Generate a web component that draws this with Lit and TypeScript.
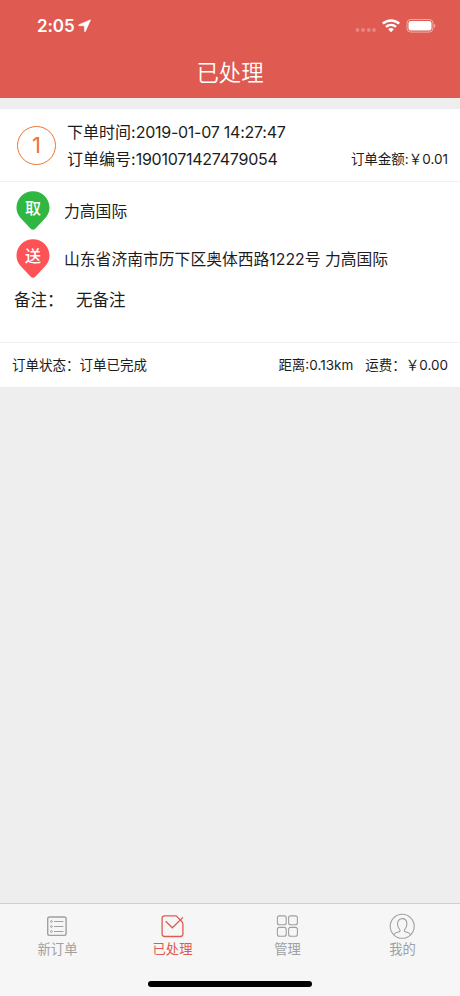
import { LitElement, html, css, svg } from "lit";
import { customElement, property } from "lit/decorators.js";
import { classMap } from "lit/directives/class-map.js";

const TABS = [
  {
    label: "新订单",
    active: false,
    icon: svg`<rect x="3.7" y="4" width="18.4" height="18.4" rx="1.8" stroke-width="1.4"/>
      <path d="M10 8.5h9.4M10 13.5h9.4M10 18.5h9.4" stroke-width="1.1"/>
      <circle cx="7.4" cy="8.5" r=".9"/><circle cx="7.4" cy="13.5" r=".9"/><circle cx="7.4" cy="18.5" r=".9"/>`,
  },
  {
    label: "已处理",
    active: true,
    icon: svg`<path d="M17.2 2.9H5.4a2.3 2.300 0 0 0-2.300 2.300v16a2.300 2.300 0 0 0 2.300 2.300h16.200a2.300 2.300 0 0 0 2.300-2.300V11.500c0-1.300-.3-2.200-1.300-3.200z" stroke-width="1.3"/>
      <path d="M6.700 8.300l6.600 6.500L24 4.400" stroke-width="1.3"/>`,
  },
  {
    label: "管理",
    active: false,
    icon: svg`<g stroke-width="1.1"><rect x="3.4" y="2.900" width="8.800" height="8.800" rx="2"/><rect x="14.600" y="2.900" width="8.800" height="8.800" rx="2"/>
      <rect x="3.400" y="14.400" width="8.800" height="8.800" rx="2"/><rect x="14.600" y="14.400" width="8.800" height="8.800" rx="2"/></g>`,
  },
  {
    label: "我的",
    active: false,
    icon: svg`<g stroke-width="1.1"><circle cx="13.200" cy="13.300" r="12"/>
      <path d="M4.700 21.700c1.200-1.700 3.200-2.200 5-2.800 1.400-.5 1.700-1.200 1.100-2.200-1.500-1.500-2.300-3.600-2.300-5.900 0-3.100 1.900-5.200 4.700-5.200s4.700 2.100 4.700 5.200c0 2.300-.8 4.400-2.300 5.900-.6 1-.3 1.700 1.100 2.200 1.800.6 3.800 1.100 5 2.800"/></g>`,
  },
];

@customElement("place-pin")
class PlacePin extends LitElement {
  @property() label = "";
  @property() kind = "pickup";
  static styles = css`
    :host { display: grid; width: 34px; height: 39px; }
    svg, span { grid-area: 1 / 1; }
    svg { width: 34px; height: 39px; }
    .pickup { fill: #2fb742; }
    .deliver { fill: #fe5356; }
    span { color: #fff; font-size: 16px; font-weight: 500; line-height: 35px; text-align: center; }
  `;
  render() {
    return html`<svg viewBox="0 0 34 39" class=${this.kind}>
        <path d="M17 .2C7.700 .2 .5 7.600 .5 16.600c0 5.500 2.500 9 6.200 12.700l8 8.400c1.500 1.400 3.100 1.400 4.600 0l8-8.400c3.700-3.700 6.200-7.200 6.200-12.700C33.500 7.600 26.300 .2 17 .2z"/>
      </svg><span>${this.label}</span>`;
  }
}

@customElement("app-root")
class AppRoot extends LitElement {
  static styles = css`
    :host {
      display: flex; flex-direction: column; width: 460px; height: 996px;
      background: #eee; color: #1c1c1c; overflow: hidden;
      font-family: Inter, "Noto Sans CJK SC", sans-serif;
      font-size: 16px; font-weight: 400; white-space: nowrap;
    }
    * { box-sizing: border-box; }
    svg { display: block; flex: none; }
    .top { height: 98px; background: #df5a50; color: #fff; flex: none; }
    .status { height: 50px; padding: 1px 24px 0 37px; display: flex; align-items: center; }
    .clock { font-size: 17px; font-weight: 600; width: 38px; letter-spacing: -0.1px; }
    .arrow { margin-left: 3px; }
    .right { margin-left: auto; }
    .title { height: 48px; line-height: 46px; text-align: center; font-size: 22.4px; font-weight: 350; }
    .card { margin-top: 11px; background: #fff; height: 278px; flex: none; display: flex; flex-direction: column; }
    .head { height: 73px; border-bottom: 1px solid #f1f1f1; display: flex; padding: 0 12px 0 17px; align-items: center; }
    .num { width: 39px; height: 39px; border: 1.3px solid #f17430; border-radius: 50%; color: #f17430;
      font-size: 22px; line-height: 37px; text-align: center; }
    .lines { margin-left: 11px; flex: 1; padding-top: 1px; }
    .line { height: 27px; line-height: 27px; display: flex; justify-content: space-between; }
    .digits { letter-spacing: -0.25px; }
    .small { font-size: 13.5px; }
    .body { height: 160px; padding: 9px 15px 0 16px; }
    .place { display: flex; align-items: center; height: 39px; margin-bottom: 9px; gap: 14px; font-size: 15.8px; }
    .remark { display: flex; line-height: 27px; margin-left: -2px; font-size: 16.5px; }
    .remark span { width: 62px; }
    .foot { border-top: 1px solid #f1f1f1; flex: 1; padding: 0 12px 2px 12px; display: flex; align-items: center; font-size: 13.5px; }
    .dist { margin-left: auto; margin-right: 12px; }
    .tabs { margin-top: auto; height: 93px; flex: none; background: #f6f6f6; border-top: 1px solid #cfcfcf; }
    .row { display: grid; grid-template-columns: repeat(4, 1fr); height: 77px; }
    .tab { display: flex; flex-direction: column; align-items: center; padding-top: 9px; color: #a0a0a0;
      font-size: 13.3px; line-height: 20px; }
    .tab svg { fill: none; stroke: currentColor; margin-right: 1px; }
    .tab.on { color: #dd5b51; }
    .home { width: 164px; height: 6px; border-radius: 3px; background: #000; margin: 0 auto; }
  `;
  render() {
    return html`
      <header class="top">
        <div class="status">
          <span class="clock">2:05</span>
          <svg class="arrow" width="14" height="14" viewBox="0 0 14 14"><path d="M12.600 .8L.8 5.800c-.5.300-.4.900.2.900l5.400.1.100 5.400c0 .6.700.7.900.2z" fill="#fff" stroke="#fff" stroke-width=".6"/></svg>
          <svg class="right" width="82" height="18" viewBox="0 0 82 18">
            <g fill="#fff" fill-opacity=".27"><circle cx="3.500" cy="13" r="2"/><circle cx="9" cy="13" r="2"/><circle cx="14.800" cy="13" r="2"/><circle cx="20" cy="13" r="2"/></g>
            <g fill="none" stroke="#fff" stroke-width="2.5"><path d="M28.800 6.700c4.700-4.400 11.700-4.400 16.400 0"/><path d="M32 9.900c2.900-2.700 7.100-2.700 10 0"/></g>
            <path d="M34.200 12.200c1.600-1.500 4-1.500 5.600 0l-2.800 3z" fill="#fff"/>
            <rect x="53" y="2.500" width="26" height="12.600" rx="3.800" fill="none" stroke="#fff" stroke-opacity=".5"/>
            <rect x="54.500" y="4" width="23" height="9.600" rx="2.400" fill="#fff"/>
            <path d="M80.100 6.600c1.700.8 1.700 3.600 0 4.400z" fill="#fff" fill-opacity=".5"/>
          </svg>
        </div>
        <div class="title">已处理</div>
      </header>
      <section class="card">
        <div class="head">
          <div class="num">1</div>
          <div class="lines">
            <div class="line"><div>下单时间:<span class="digits">2019-01-07 14:27:47</span></div></div>
            <div class="line"><div>订单编号:<span class="digits">1901071427479054</span></div><div class="small">订单金额:￥0.01</div></div>
          </div>
        </div>
        <div class="body">
          <div class="place"><place-pin label="取" kind="pickup"></place-pin><span>力高国际</span></div>
          <div class="place"><place-pin label="送" kind="deliver"></place-pin><span>山东省济南市历下区奥体西路1222号 力高国际</span></div>
          <div class="remark"><span>备注：</span>无备注</div>
        </div>
        <div class="foot"><span>订单状态：订单已完成</span><span class="dist">距离:0.13km</span><span>运费：￥0.00</span></div>
      </section>
      <nav class="tabs">
        <div class="row">${TABS.map(
          (t) => html`<div class=${classMap({ tab: true, on: t.active })}>
            <svg width="26" height="26" viewBox="0 0 26 26">${t.icon}</svg><span>${t.label}</span></div>`
        )}</div>
        <div class="home"></div>
      </nav>`;
  }
}
